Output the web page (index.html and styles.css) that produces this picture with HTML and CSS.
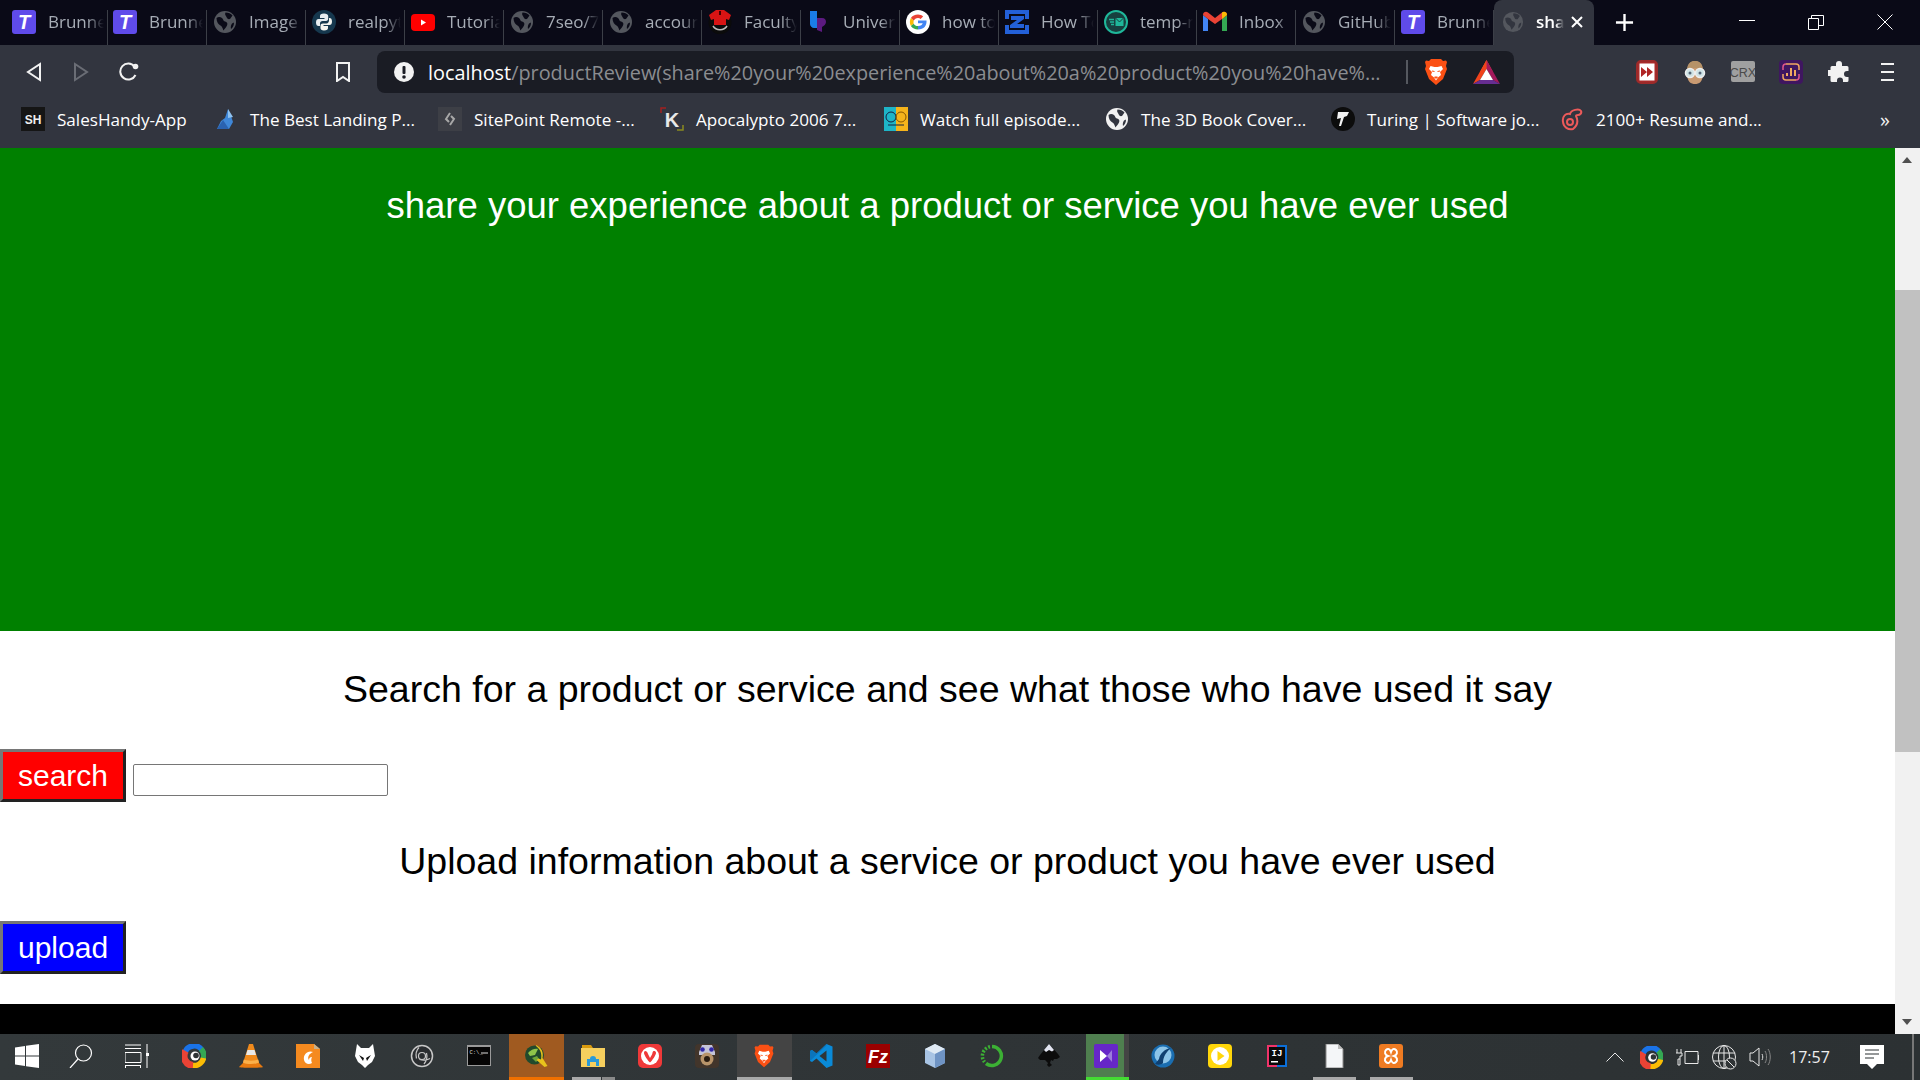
FILE: index.html
```html
<!DOCTYPE html>
<html lang="en">
<head>
<meta charset="utf-8">
<title>share your experience</title>
<link rel="stylesheet" href="styles.css">
</head>
<body>
<svg class="defs" aria-hidden="true">
  <symbol id="tee" viewBox="0 0 24 24"><rect width="24" height="24" rx="3" fill="#5f4bea"/><text x="12" y="19" text-anchor="middle" class="logo-t">T</text></symbol>
  <symbol id="globe" viewBox="0 0 24 24"><circle cx="12" cy="12" r="11" class="gl-disc"/><path class="gl-cut" d="M3.500 8c2-1.500 4-1 5.500 0s1 3 3 3.500 3 2 2 4-2.500 3.500-3.500 5c-1-2-1-4-3-5S3.500 12 3.500 8zM12.500 2.500c3 0 5.500 1 7 3l-2.500 3.500c-2 .5-3-.5-3.500-2s-2-2-1-4.500zM19 13.500l2-1c0 3-1 5-3 6.500-.5-2 0-4 1-5.500z"/></symbol>
  <symbol id="brave" viewBox="0 0 24 28"><path d="M7 1h10l2 2 3-.5 1 1.500-1 4 1 3-4 10-7 6-7-6-4-10 1-3-1-4 1-1.500 3 .5z" fill="#fb5014"/><path d="M6.500 8l4 1h3l4-1 1.500 3-3 3 1 3-3 2.500-2 3-2-3-3-2.500 1-3-3-3z" fill="#fff"/><path d="M8 13l2.500.5M16 13l-2.500.5M10.500 19h3l-1.500 1.500z" stroke="#fb5014" fill="#fb5014"/></symbol>
  <symbol id="swirl" viewBox="0 0 24 24"><path d="M3 8.500A9.500 9.500 0 0 1 20.500 7" fill="none" stroke="#1a73e8" stroke-width="5.500"/><path d="M19 5A9.500 9.500 0 0 1 21 15.500" fill="none" stroke="#34a853" stroke-width="5.500"/><path d="M21.500 14A9.500 9.500 0 0 1 9 21" fill="none" stroke="#fbbc05" stroke-width="5.500"/><path d="M11 21.500A9.500 9.500 0 0 1 3.500 7" fill="none" stroke="#ea4335" stroke-width="7"/><circle cx="13" cy="12" r="4.500" fill="#fff"/><circle cx="14" cy="11.500" r="2.800" fill="#2f3436"/></symbol>
</svg>

<div class="browser">
  <header class="tabs">
    <div class="tab"><svg class="fav"><use href="#tee"/></svg><span class="tab-title">Brunner</span></div>
    <div class="tab"><svg class="fav"><use href="#tee"/></svg><span class="tab-title">Brunner</span></div>
    <div class="tab"><svg class="fav"><use href="#globe"/></svg><span class="tab-title">Image</span></div>
    <div class="tab"><svg class="fav" viewBox="0 0 24 24"><circle cx="12" cy="12" r="12" fill="#16384e"/><path d="M12 3.500c-3 0-4 1-4 2.500v2h4.500v1H6.500C5 9 4 10 4 12.500S5 16 6.500 16H8v-2.500c0-1.500 1-2.500 2.500-2.500h3.500c1.500 0 2.200-1 2.200-2.500V6c0-1.500-1.700-2.500-4.200-2.500z" fill="#e8eef2"/><path d="M12 20.500c3 0 4-1 4-2.500v-2h-4.500v-1h6c1.500 0 2.500-1 2.500-3.500S19 8 17.500 8H17v2.500c0 1.500-1 3-2.500 3H11c-1.500 0-2.500 .8-2.500 2.200V18c0 1.500 1 2.500 3.500 2.500z" fill="#f5f5f0"/></svg><span class="tab-title">realpyth</span></div>
    <div class="tab"><svg class="fav" viewBox="0 0 24 24"><rect y="4" width="24" height="17" rx="4" fill="#f00"/><path d="M10 9.500l5 3-5 3z" fill="#fff"/></svg><span class="tab-title">Tutorial</span></div>
    <div class="tab"><svg class="fav"><use href="#globe"/></svg><span class="tab-title">7seo/7</span></div>
    <div class="tab"><svg class="fav"><use href="#globe"/></svg><span class="tab-title">account</span></div>
    <div class="tab"><svg class="fav" viewBox="0 0 24 24"><circle cx="12" cy="12.500" r="11.500" fill="#0b0b0b"/><path d="M8 0h8l7 5-2 5-3-1v6H6V9l-3 1-2-5z" fill="#d81414"/><path d="M11 1h2v4h-2z" fill="#400"/><path d="M5 16c3 5 11 5 14 0" stroke="#bbb" stroke-width="1.500" fill="none"/></svg><span class="tab-title">Faculty</span></div>
    <div class="tab"><svg class="fav" viewBox="0 0 24 24"><path d="M3 1h7v14c0 2 1 3 2 3H7c-2 0-4-2-4-4z" fill="#1a7de8"/><path d="M10 8h5c3 0 4 2 4 4s-2 4-4 5v5l-5-2z" fill="#5c1a80"/></svg><span class="tab-title">University</span></div>
    <div class="tab"><svg class="fav" viewBox="0 0 24 24"><circle cx="12" cy="12" r="12" fill="#fff"/><path d="M12 10.500h8.500c.5 5-2.500 9-8.500 9v-3.500c2.800 0 4.300-1.300 4.700-2.700H12z" fill="#4285f4"/><path d="M12 4.500c2 0 3.800.7 5.100 1.900L14.600 8.900c-.7-.6-1.600-1-2.600-1-2 0-3.500 1.200-4.300 2.800L4.900 8c1.300-2 4-3.500 7.100-3.500z" fill="#ea4335"/><path d="M4.900 8l2.800 2.700c-.3 1-.3 2 0 3L4.900 16c-1.400-2.500-1.400-5.500 0-8z" fill="#fbbc05"/><path d="M4.900 16l2.800-2.300c.8 1.500 2.300 2.300 4.300 2.300v3.500c-3 0-5.700-1.500-7.100-3.500z" fill="#34a853"/></svg><span class="tab-title">how to</span></div>
    <div class="tab"><svg class="fav" viewBox="0 0 24 24"><path d="M0 0h24v9h-4V4H4v5H0zM0 15h4v5h16v-5h4v9H0z" fill="#2360d8"/><path d="M6 6h13v3l-7 5h7v4H5v-3l7-5H6z" fill="#2360d8"/></svg><span class="tab-title">How To</span></div>
    <div class="tab"><svg class="fav" viewBox="0 0 24 24"><circle cx="12" cy="12" r="11" fill="#17403f" stroke="#1fb79a" stroke-width="2"/><path d="M5 9.500h5M6 12h4M7 14.500h3" stroke="#1fb79a" stroke-width="1.500"/><path d="M11.500 8h8v8h-8z" fill="#1fb79a"/><path d="M11.500 8l4 4 4-4" stroke="#17403f" fill="none"/></svg><span class="tab-title">temp-m</span></div>
    <div class="tab"><svg class="fav" viewBox="0 0 24 24"><path d="M0 5v16h5V9z" fill="#4285f4"/><path d="M19 9v12h5V5z" fill="#34a853"/><path d="M0 5l5 4 7 5 7-5 5-4c0-3-3-4-5-2.500L12 8 5 2.500C3 1 0 2 0 5z" fill="#ea4335"/><path d="M19 2.500c2-1.500 5-.5 5 2.500l-5 4z" fill="#fbbc05"/></svg><span class="tab-title">Inbox</span></div>
    <div class="tab"><svg class="fav"><use href="#globe"/></svg><span class="tab-title">GitHub</span></div>
    <div class="tab"><svg class="fav"><use href="#tee"/></svg><span class="tab-title">Brunner</span></div>
    <div class="tab tab-active"><svg class="fav fav-active"><use href="#globe"/></svg><span class="tab-title">share</span><svg class="tab-x" viewBox="0 0 12 12"><path d="M1 1l10 10M11 1L1 11"/></svg></div>
    <svg class="new-tab" viewBox="0 0 20 20"><path d="M10 1v18M1 10h18"/></svg>
    <div class="win-controls">
      <svg class="win-btn" viewBox="0 0 16 16"><path d="M0 6.500h16"/></svg>
      <svg class="win-btn" viewBox="0 0 16 16"><path d="M.5 4.500h10v11H.500zM3.500 4.500v-3h12v10h-5"/></svg>
      <svg class="win-btn" viewBox="0 0 16 16"><path d="M.5.500l15 15M15.500.500l-15 15"/></svg>
    </div>
  </header>

  <nav class="toolbar">
    <svg class="nav-ico back" viewBox="0 0 16 20"><path d="M14 2L2 10l12 8z"/></svg>
    <svg class="nav-ico fwd" viewBox="0 0 16 20"><path d="M2 2l12 8-12 8z"/></svg>
    <svg class="nav-ico reload" viewBox="0 0 20 20"><path d="M16.500 13a8 8 0 1 1-1-8.500"/><circle cx="16.500" cy="4.500" r="2.800" class="solid"/></svg>
    <svg class="nav-ico mark" viewBox="0 0 16 20"><path d="M2 1h12v18l-6-4-6 4z"/></svg>
    <div class="address">
      <svg class="info" viewBox="0 0 20 20"><circle cx="10" cy="10" r="10" fill="#f2f2f2"/><rect x="8.500" y="4" width="3" height="8" rx="1" fill="#1a1c24"/><circle cx="10" cy="15" r="1.800" fill="#1a1c24"/></svg>
      <div class="url"><span class="host">localhost</span>/productReview(share%20your%20experience%20about%20a%20product%20you%20have%...</div>
      <span class="addr-sep"></span>
      <svg class="brave"><use href="#brave"/></svg>
      <svg class="bat" viewBox="0 0 27 24"><path d="M13.500 0L20 12l-6.500-3L7 12z" fill="#ff5a1e"/><path d="M13.500 0L0 24l7-4 6.500-11z" fill="#f0431c"/><path d="M13.500 0L27 24l-7-4-6.500-11z" fill="#a3195b"/><path d="M0 24l7-4h13l7 4z" fill="#662d91"/><path d="M13.500 9l6.500 11H7z" fill="#fff"/></svg>
    </div>
    <div class="ext-group">
      <svg class="ext" viewBox="0 0 22 24"><rect x="1" y="1" width="20" height="22" rx="4" fill="#a82a2a" stroke="#9c2a2a" stroke-width="2"/><rect x="3.500" y="3.500" width="15" height="17" fill="#fff"/><path d="M5 7l6 5-6 5zM11 7l6 5-6 5z" fill="#b02525"/></svg>
      <svg class="ext" viewBox="0 0 22 24"><path d="M3 13C3 4 7 1 11 1s8 3 8 12-4 11-8 11-8-2-8-11z" fill="#c99a72"/><path d="M3 11C3 3 7 1 11 1s8 2 8 10c-4-4-12-4-16 0z" fill="#b69268"/><circle cx="6" cy="13" r="4.500" fill="#cfe3e6" stroke="#eee" stroke-width="1.500"/><circle cx="16" cy="13" r="4.500" fill="#cfe3e6" stroke="#eee" stroke-width="1.500"/><circle cx="6" cy="13" r="1.500" fill="#567"/><circle cx="16" cy="13" r="1.500" fill="#567"/></svg>
      <svg class="ext ext-wide" viewBox="0 0 24 24"><rect y="1" width="24" height="21" rx="2" fill="#a0a0a0"/><text x="12" y="16.500" text-anchor="middle" class="logo-crx">CRX</text></svg>
      <svg class="ext ext-wide" viewBox="0 0 24 24"><rect width="24" height="24" rx="4" fill="#3f1660"/><path d="M7 4h10a3 3 0 0 1 3 3v3M17 20H7a3 3 0 0 1-3-3v-3" fill="none" stroke="#f1a860" stroke-width="1.500"/><path d="M4 10V7a3 3 0 0 1 3-3M20 14v3a3 3 0 0 1-3 3" fill="none" stroke="#e2558c" stroke-width="1.500"/><path d="M8 16v-3M12 16V8M16 16v-6" stroke="#f1a860" stroke-width="2"/></svg>
      <svg class="ext" viewBox="0 0 22 22"><path d="M8 3a3 3 0 0 1 6 0v2h5a1.500 1.500 0 0 1 1.500 1.500V10h-1.500a3 3 0 0 0 0 6H20.500v3.500A1.500 1.500 0 0 1 19 21h-4v-1.500a3 3 0 0 0-6 0V21H4a1.500 1.500 0 0 1-1.500-1.500V15H1a3 3 0 0 1 0-6h1.500V6.500A1.500 1.500 0 0 1 4 5h4z" fill="#f2f2f2"/></svg>
      <svg class="ext menu" viewBox="0 0 15 20"><path d="M1 2h13M1 10h13M1 18h13"/></svg>
    </div>
  </nav>

  <div class="bookmarks">
    <div class="bm"><svg class="fav" viewBox="0 0 24 24"><rect width="24" height="24" fill="#151515"/><text x="12" y="17" text-anchor="middle" class="logo-sh">SH</text></svg><span>SalesHandy-App</span></div>
    <div class="bm"><svg class="fav" viewBox="0 0 24 24"><path d="M14 2l3 7 2 6-4 7H3l4-8 4-3z" fill="#3f87d8"/><path d="M3 22l6-9 6 9z" fill="#2a62b0"/><path d="M14 2l5 8-5 1z" fill="#8fc2f0"/></svg><span>The Best Landing P...</span></div>
    <div class="bm"><svg class="fav" viewBox="0 0 24 24"><rect width="24" height="24" fill="#3d3f46"/><path d="M12 6l-4 6 3 3M12 18l4-6-3-3" stroke="#a8a8a8" stroke-width="2" fill="none"/></svg><span>SitePoint Remote -...</span></div>
    <div class="bm"><svg class="fav" viewBox="0 0 24 24"><path d="M1 6V1h5" stroke="#a32020" stroke-width="1.500" fill="none"/><path d="M23 18v5h-6" stroke="#8a8a20" stroke-width="1.500" fill="none"/><text x="12" y="20" text-anchor="middle" class="logo-k">K</text></svg><span>Apocalypto 2006 7...</span></div>
    <div class="bm"><svg class="fav" viewBox="0 0 24 24"><rect width="12" height="24" fill="#1eb5c8"/><rect x="12" width="12" height="24" fill="#f6b41b"/><circle cx="7" cy="10" r="5" fill="none" stroke="#124" stroke-width="1"/><circle cx="17" cy="10" r="5" fill="none" stroke="#850" stroke-width="1"/><path d="M4 18h16" stroke="#124" stroke-width="1"/></svg><span>Watch full episode...</span></div>
    <div class="bm"><svg class="fav globe-light"><use href="#globe"/></svg><span>The 3D Book Cover...</span></div>
    <div class="bm"><svg class="fav" viewBox="0 0 24 24"><circle cx="12" cy="12" r="12" fill="#0c0c0c"/><path d="M7 5h11l-2 4-3 1-3 9H8l2-8-4 1z" fill="#f2f2f2"/></svg><span>Turing | Software jo...</span></div>
    <div class="bm"><svg class="fav" viewBox="0 0 24 24"><path d="M13 22a8 8 0 0 1-10-7C2 9 6 6 10 7c1-4 9-6 11-3 1 2-1 4-3 4-1 0-2 0-2 1 2 4 2 9-3 13z" fill="none" stroke="#ec5a5a" stroke-width="2"/><circle cx="10" cy="15" r="3" fill="none" stroke="#ec5a5a" stroke-width="2"/></svg><span>2100+ Resume and...</span></div>
    <span class="bm-more">»</span>
  </div>

  <div class="viewport">
    <main class="page">
      <section class="hero"><h2 class="heading">share your experience about a product or service you have ever used</h2></section>
      <section class="panel">
        <h2 class="heading search-h">Search for a product or service and see what those who have used it say</h2>
        <div class="search-row"><button class="btn btn-red">search</button><input class="search-input" type="text"></div>
        <h2 class="heading upload-h">Upload information about a service or product you have ever used</h2>
        <div class="upload-row"><button class="btn btn-blue">upload</button></div>
      </section>
      <div class="blackbar"></div>
    </main>
    <aside class="scrollbar">
      <div class="arrow arrow-up"></div>
      <div class="track"><div class="thumb"></div></div>
      <div class="arrow arrow-down"></div>
    </aside>
  </div>

  <footer class="taskbar">
    <div class="task-left">
      <div class="sys"><svg class="tb" viewBox="0 0 24 24"><path d="M0 3.500l10-1.500v9.500H0zM11 1.800L24 0v11.500H11zM0 12.500h10V22L0 20.500zM11 12.500h13V24l-13-1.800z" fill="#fff"/></svg></div>
      <div class="sys"><svg class="tb" viewBox="0 0 24 24"><circle cx="14.500" cy="9" r="8" fill="none" stroke="#fff" stroke-width="1.200"/><path d="M9 15L1 24" stroke="#fff" stroke-width="1.200"/></svg></div>
      <div class="sys sys-last"><svg class="tb" viewBox="0 0 24 24"><path d="M0 1h16M0 4.500h16M0 8.500h16v10H0zM0 21.500h16M.5 21.500V24M15.500 21.500V24M22 0v24" fill="none" stroke="#fff" stroke-width="1"/><rect x="21" y="9" width="3" height="3" fill="#fff"/></svg></div>
      <div class="task"><svg class="tb"><use href="#swirl"/></svg></div>
      <div class="task"><svg class="tb" viewBox="0 0 24 24"><path d="M10 0h4l6 19c0 3-16 3-16 0z" fill="#f08a1c"/><path d="M8.500 6h7l1.500 5H7z" fill="#e8e8e8"/><path d="M4 19h16l4 4c0 1-24 1-24 0z" fill="#e87a10"/><path d="M4 18.500c3 2 13 2 16 0l-.8-3c-3 1.500-11.400 1.500-14.400 0z" fill="#fbb04a"/></svg></div>
      <div class="task"><svg class="tb" viewBox="0 0 24 24"><path d="M0 0h18l6 5v19H0z" fill="#f58a1f"/><path d="M18 0l6 5h-6z" fill="#c9b08a"/><path d="M17 8c-5-2-10 2-9 8 1 4 5 5 8 3-1-2-1-4 0-6-2 0-3 1-3 3-2-3 0-6 4-8z" fill="#fff"/></svg></div>
      <div class="task"><svg class="tb" viewBox="0 0 24 24"><path d="M4 0l4 4h8l4-4 2 12-3 6-4 3-3 3-3-3-4-3-3-6z" fill="#fff"/><path d="M6 11l5 3-1 3zM18 11l-5 3 1 3z" fill="#111"/></svg></div>
      <div class="task"><svg class="tb" viewBox="0 0 24 24"><circle cx="12" cy="12" r="10.500" fill="#2a2d30" stroke="#c8c8c8" stroke-width="1.500"/><circle cx="12" cy="12" r="3.500" fill="none" stroke="#c8c8c8" stroke-width="1.200"/><path d="M9 3.500c-3 3-3.500 7-2.500 11M20 14.500c-3.500 2-7 2-10.500 1M14 20c2.500-3 3.500-7 2.500-11" stroke="#c8c8c8" stroke-width="1.200" fill="none"/></svg></div>
      <div class="task"><svg class="tb" viewBox="0 0 24 24"><rect y="1" width="24" height="21" fill="#9a9a9a"/><rect x="1" y="3" width="22" height="18" fill="#050505"/><text x="2.500" y="10" class="logo-cmd">C:\_</text><path d="M14 9h7" stroke="#ddd" stroke-width="1"/></svg></div>
      <div class="task task-hot"><svg class="tb" viewBox="0 0 24 24"><circle cx="10.500" cy="11" r="9.500" fill="#214a2c"/><path d="M4 9c3-4 8-5 10-4l-3 6-5 1z" fill="#8fc44a"/><path d="M8 14l5-2 2 3-3 3z" fill="#6ea43a"/><path d="M12 1c5 2 8 7 6.500 13l5 8-3 1-8-7 2-1.500 2.500 1c1-5 0-10-5-13.500z" fill="#e8c21c"/></svg></div>
      <div class="task task-open task-open-split"><svg class="tb" viewBox="0 0 24 24"><path d="M1 1h9l2 3H1z" fill="#d99a0e"/><rect y="4" width="24" height="19" fill="#f6cf5e"/><path d="M6 22v-7h3a3 3 0 0 1 6 0h3v7h-3v-4H9v4z" fill="#2a9ad8"/></svg></div>
      <div class="task"><svg class="tb" viewBox="0 0 24 24"><rect width="24" height="24" rx="5" fill="#ef3939"/><circle cx="12" cy="12" r="9" fill="#fff"/><path d="M7 7c1.500 0 2.500 1 3 3l2 4 2-3.500c.5-1 .3-2 1-3s3-.5 3 1.500c0 2-4 8-6 9.500-2-1.500-6-7.500-6-9.500 0-1 .5-2 1-2z" fill="#ef3939"/></svg></div>
      <div class="task"><svg class="tb" viewBox="0 0 24 24"><rect width="24" height="24" rx="4" fill="#42352b"/><path d="M4 8l3-7h10l3 7v3H4z" fill="#c4c4d8"/><circle cx="7.500" cy="5.500" r="2.300" fill="#3128a8"/><circle cx="16.500" cy="5.500" r="2.300" fill="#3128a8"/><circle cx="12" cy="15" r="6.500" fill="#b8946a"/><circle cx="12" cy="15" r="3" fill="#2a1c10"/></svg></div>
      <div class="task task-open task-open-dim"><svg class="tb"><use href="#brave"/></svg></div>
      <div class="task"><svg class="tb" viewBox="0 0 24 24"><path d="M17.500 0L7.500 9.500 3 6 1 7v10l2 1 4.500-3.500 10 9.500 6-2.500V2.500z" fill="#0a8ad8"/><path d="M17.500 6.500v11l-7-5.500z" fill="#2f3436"/><path d="M1 17l16.500-15.500V0L7.500 9.500 3 6 1 7z" fill="#0b74bb"/></svg></div>
      <div class="task"><svg class="tb" viewBox="0 0 24 24"><rect width="24" height="24" fill="#9b0000"/><text x="12" y="19" text-anchor="middle" class="logo-fz">Fz</text></svg></div>
      <div class="task"><svg class="tb" viewBox="0 0 24 24"><path d="M12 0l10 5v14l-10 5-10-5V5z" fill="#a8c4e4"/><path d="M12 0l10 5-10 5L2 5z" fill="#dfeaf4"/><path d="M12 10l10-5v14l-10 5z" fill="#6f94c4"/></svg></div>
      <div class="task"><svg class="tb" viewBox="0 0 24 24"><path d="M12 2.500a9.500 9.500 0 1 1-6 17" fill="none" stroke="#3cb034" stroke-width="3.500"/><path d="M10 2.700A9.500 9.500 0 0 0 4.500 18" fill="none" stroke="#3cb034" stroke-width="3.500" stroke-dasharray="2 1.500"/></svg></div>
      <div class="task"><svg class="tb" viewBox="0 0 24 24"><path d="M12 0l9 10 2 3-3 2h-3l-1 2-2-1-1 3 2 2-3 2-2-2 1-2-3-3H3l-2-2 2-3z" fill="#0c0c0c"/><path d="M12 0l5 6-2 1.500L12 6 9 8 7 6z" fill="#e3e6f2"/></svg></div>
      <div class="task task-active"><svg class="tb" viewBox="0 0 24 24"><rect width="24" height="24" rx="2" fill="#6626c8"/><path d="M6 6l7 6-7 6z" fill="#fff"/><path d="M18 6l-5 6 5 6z" fill="#9b7cdc"/></svg></div>
      <div class="task"><svg class="tb" viewBox="0 0 24 24"><circle cx="12" cy="12" r="11.500" fill="#1a6db0"/><circle cx="12" cy="11" r="8.500" fill="#8cc4e8"/><path d="M20 4C14 5 9 9 8 15l-4 5c3 1 6 1 8-1 0-6 3-11 8-15z" fill="#0f3f70"/></svg></div>
      <div class="task"><svg class="tb" viewBox="0 0 24 24"><rect width="24" height="24" rx="4" fill="#ffd60a"/><circle cx="12" cy="12" r="9" fill="#fff"/><path d="M9.500 7l7 5-7 5z" fill="#ffd60a"/></svg></div>
      <div class="task"><svg class="tb" viewBox="0 0 24 24"><rect x="2" y="1" width="20" height="22" fill="#0c6fd8"/><path d="M2 1h10v2H4v18h8v2H2z" fill="#f0336a"/><rect x="4" y="3" width="16" height="18" fill="#0a0a0a"/><text x="12" y="12" text-anchor="middle" class="logo-ij">IJ</text><rect x="6" y="17" width="7" height="1.500" fill="#fff"/></svg></div>
      <div class="task task-open"><svg class="tb" viewBox="0 0 24 24"><path d="M4 0h12l5 5v19H4z" fill="#f4f6f8" stroke="#8a8a8a"/><path d="M16 0l5 5h-5z" fill="#bbb"/></svg></div>
      <div class="task task-open"><svg class="tb" viewBox="0 0 24 24"><rect width="24" height="24" rx="3" fill="#ef7b22"/><path d="M7 6c2-2 4-1 5 2 1-3 3-4 5-2s1 5-2 6c3 1 4 4 2 6s-4 1-5-2c-1 3-3 4-5 2s-1-5 2-6c-3-1-4-4-2-6z" fill="none" stroke="#fff" stroke-width="2"/></svg></div>
    </div>
    <div class="tray">
      <svg class="tray-ico chev" viewBox="0 0 18 10"><path d="M.5 9.500L9 1l8.500 8.500"/></svg>
      <svg class="tray-ico chrome"><use href="#swirl"/></svg>
      <svg class="tray-ico plug" viewBox="0 0 24 18"><path d="M1 1v4M5 1v4M0 5h6v3H4v3M4 11H2v6h2zM9 3.500h13v12H9zM22.500 7v5"/></svg>
      <svg class="tray-ico net" viewBox="0 0 25 25"><circle cx="12" cy="12" r="11.500"/><ellipse cx="12" cy="12" rx="5.500" ry="11.500"/><path d="M1 8h22M1 16h22M12 .5v23"/><circle cx="18.500" cy="18.500" r="5.500" class="net-bg"/><path d="M15 15l7 7"/></svg>
      <svg class="tray-ico vol" viewBox="0 0 24 20"><path d="M1 6h3l6-5v18l-6-5H1z"/><path class="dim1" d="M13 7c1 2 1 4 0 6"/><path class="dim2" d="M16 4c2 3 2 9 0 12M19 2c3 4 3 12 0 16"/></svg>
      <span class="clock">17:57</span>
      <svg class="tray-ico note" viewBox="0 0 24 24"><path d="M0 0h24v19h-7l-5 5-5-5H0z" fill="#fff"/><path d="M5 5h14M5 9h14M5 13h9" stroke="#2b3033" stroke-width="1"/></svg>
      <span class="show-desk"></span>
    </div>
  </footer>
</div>
</body>
</html>
```

FILE: styles.css
```css
* { box-sizing: border-box; }
html, body { margin: 0; height: 100%; overflow: hidden; }
body { font-family: "Liberation Sans", Arial, sans-serif; background: #000; }
.defs { position: absolute; width: 0; height: 0; }
.logo-t { font: italic 700 20px "Liberation Sans", sans-serif; fill: #fff; }
.logo-crx { font: 400 12.500px "Liberation Sans", sans-serif; fill: #4a4a4a; }
.logo-sh { font: 700 12px "Liberation Sans", sans-serif; fill: #eee; }
.logo-k { font: 700 20px "Liberation Sans", sans-serif; fill: #e8e8e8; }
.logo-fz { font: italic 700 18px "Liberation Sans", sans-serif; fill: #fff; }
.logo-ij { font: 700 9px "Liberation Mono", monospace; fill: #fff; }
.logo-cmd { font: 400 5.500px "Liberation Mono", monospace; fill: #ddd; }
.gl-disc { fill: currentColor; }
.gl-cut { fill: var(--cut, #0a0a17); }

.browser { display: flex; flex-direction: column; height: 1080px; width: 1920px; }

/* tab strip */
.tabs { display: flex; align-items: stretch; height: 45px; padding-left: 10px; background: #0a0a17; color: #54575e; flex: none; }
.tab { width: 99px; display: flex; align-items: center; padding: 0 5px 2px 5px; gap: 12px; position: relative; }
.tab:first-child { padding-left: 2px; }
.tab:nth-child(2) { padding-left: 4px; }
.tab::after { content: ""; position: absolute; right: 1px; top: 10px; bottom: 0; width: 1px; background: #3c3f47; }
.fav { width: 24px; height: 24px; flex: none; }
.tab-title { font: 400 17px "Open Sans", sans-serif; color: #a7adb6; white-space: nowrap; overflow: hidden; flex: 1; min-width: 0;
  -webkit-mask-image: linear-gradient(90deg, #000 70%, transparent 100%); mask-image: linear-gradient(90deg, #000 70%, transparent 100%); }
.tab-active { width: 100px; margin-left: -1px; background: #32353f; border-radius: 8px 8px 0 0; padding: 0 11px 2px 8px; gap: 12px; --cut: #32353f; }
.tab-active::after { display: none; }
.tab-active .tab-title { color: #fff; font-weight: 600; flex: 1; }
.fav-active { width: 22px; height: 22px; }
.tab-x { width: 12px; height: 12px; flex: none; margin-left: -5px; stroke: #fff; stroke-width: 2; fill: none; }
.new-tab { width: 19px; height: 19px; margin: 13px 0 0 21px; stroke: #fff; stroke-width: 2.500; fill: none; flex: none; }
.win-controls { margin-left: auto; display: flex; gap: 53px; padding: 14px 27px 0 0; }
.win-btn { width: 16px; height: 16px; stroke: #fff; stroke-width: 1; fill: none; }

/* toolbar */
.toolbar { height: 54px; background: #32353f; display: flex; align-items: center; flex: none; padding: 0 0 0 26px; color: #fff; }
.nav-ico { height: 20px; width: 16px; fill: none; stroke: #f2f2f2; stroke-width: 2; flex: none; }
.fwd { margin-left: 31px; stroke: #6a6d75; }
.reload { margin-left: 30px; width: 20px; }
.reload .solid { fill: #f2f2f2; stroke: none; }
.mark { margin-left: 196px; }
.address { width: 1137px; height: 42px; margin-left: 26px; background: #1a1c24; border-radius: 8px; display: flex; align-items: center; padding-left: 17px; flex: none; }
.info { width: 20px; height: 20px; flex: none; }
.url { margin-left: 14px; width: 978px; font: 400 19.850px "Open Sans", sans-serif; color: #8b8d91; white-space: nowrap; overflow: hidden; }
.host { color: #fff; }
.addr-sep { width: 2px; height: 24px; background: #55585f; flex: none; }
.brave { width: 24px; height: 28px; margin-left: 16px; flex: none; }
.bat { width: 27px; height: 24px; margin-left: 25px; flex: none; }
.ext-group { display: flex; align-items: center; margin-left: 122px; gap: 26px; }
.ext { width: 22px; height: 24px; flex: none; }
.ext-wide { width: 24px; margin: 0 -1px; }
.menu { width: 15px; height: 20px; stroke: #f2f2f2; stroke-width: 2; margin-left: 4px; }

/* bookmarks */
.bookmarks { height: 49px; background: #32353f; flex: none; display: grid; grid-template-columns: 193px 224px 222px 224px 221px 226px 229px 320px 1fr; padding: 0 0 9px 21px; align-items: center; }
.bm { display: flex; align-items: center; gap: 12px; font: 400 17.100px "Open Sans", sans-serif; color: #fff; white-space: nowrap; }
.bm-more { font: 400 20px "Open Sans", sans-serif; color: #f2f2f2; }
.globe-light { color: #f2f2f2; --cut: #32353f; }

/* page */
.viewport { display: flex; flex: 1; min-height: 0; }
.page { flex: 1; min-width: 0; display: flex; flex-direction: column; background: #fff; }
.hero { height: 483px; background: #008000; padding-top: 37px; }
.heading { margin: 0; font: 400 37.500px/41px "Liberation Sans", Arial, sans-serif; text-align: center; color: #000; }
.hero .heading { color: #fff; font-size: 36.500px; }
.panel { flex: 1; display: flex; flex-direction: column; }
.search-h { margin-top: 38px; }
.search-row { display: flex; align-items: flex-end; gap: 7px; margin-top: 39px; }
.upload-h { margin-top: 39px; }
.upload-row { display: flex; margin-top: 39px; }
.btn { font: 400 30px "Liberation Sans", Arial, sans-serif; color: #fff; border: 3px solid #767676; padding: 6px 15px; height: 53px; width: 126px; }
.btn-red { background: #f00; border-color: #767676 #222 #222 #767676; }
.btn-blue { background: #00f; border-color: #767676 #222 #222 #767676; }
.search-input { width: 255px; height: 32px; border: 1px solid #767676; border-radius: 2px; margin-bottom: 6px; background: #fff; padding: 1px 2px; }
.blackbar { height: 30px; background: #000; flex: none; }

.scrollbar { width: 25px; background: #f1f1f1; display: flex; flex-direction: column; flex: none; }
.arrow { height: 25px; position: relative; flex: none; }
.arrow::after { content: ""; position: absolute; left: 7px; border-left: 5.500px solid transparent; border-right: 5.500px solid transparent; }
.arrow-up::after { top: 9px; border-bottom: 6px solid #505050; }
.arrow-down::after { bottom: 9px; border-top: 6px solid #505050; }
.track { flex: 1; padding-top: 117px; }
.thumb { height: 462px; background: #c1c1c1; }

/* taskbar */
.taskbar { height: 46px; flex: none; background: linear-gradient(90deg, #33393b 0%, #2f3436 50%, #2c3133 100%); display: flex; align-items: stretch; }
.task-left { display: flex; align-items: stretch; }
.sys { width: 54px; display: flex; align-items: center; justify-content: center; padding-bottom: 2px; }
.sys-last { width: 57.500px; }
.task { width: 57px; display: flex; align-items: center; justify-content: center; position: relative; padding-bottom: 2px; }
.tb { width: 24px; height: 24px; flex: none; }
.task-hot { background: linear-gradient(#a05a20, #a05a20) 1px 0 / 55px 100% no-repeat; }
.task-hot::after { content: ""; position: absolute; left: 1px; width: 55px; bottom: 0; height: 3px; background: #f07000; }
.task-open::after { content: ""; position: absolute; left: 7px; right: 7px; bottom: 0; height: 3px; background: #a9a9a9; }
.task-open-split::after { background: linear-gradient(90deg, #a9a9a9 0 68%, #2f3436 68% 70%, #8a8a8a 70%); }
.task-open-dim { background: linear-gradient(#444, #444) 1px 0 / 55px 100% no-repeat; }
.task-open-dim::after { left: 1px; right: 1px; }
.task-active { background: linear-gradient(90deg, transparent 0 8px, #4f7f4f 8px 46px, #444 46px 51px, transparent 51px); }
.task-active::after { content: ""; position: absolute; left: 8px; width: 43px; bottom: 0; height: 3px; background: #44dd33; }
.tray { margin-left: auto; display: flex; align-items: center; position: relative; padding-right: 6px; }
.tray-ico { flex: none; fill: none; stroke: #e8e8e8; stroke-width: 1; }
.chev { width: 18px; height: 10px; margin-right: 16px; }
.chrome { width: 23px; height: 23px; margin-right: 13px; stroke: none; }
.plug { width: 24px; height: 18px; margin-right: 12px; }
.net { width: 25px; height: 25px; margin-right: 12px; }
.net-bg { fill: #2f3436; }
.vol { width: 24px; height: 20px; margin-right: 16px; }
.dim1 { stroke: #ddd; }
.dim2 { stroke: #888; }
.clock { font: 400 16px "Open Sans", sans-serif; color: #eee; width: 43px; margin-right: 28px; }
.note { width: 24px; height: 24px; stroke: none; margin-right: 30px; }
.show-desk { position: absolute; right: 6px; top: 0; bottom: 0; width: 2px; background: #777; }
```
